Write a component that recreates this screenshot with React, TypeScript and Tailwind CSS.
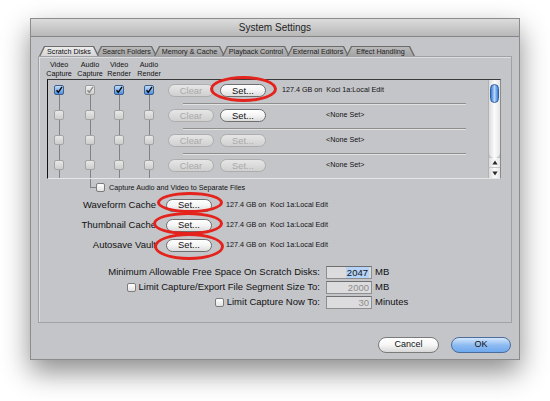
import React from "react";

const tabs = [
  { label: "Scratch Disks", w: "w-[60px]", active: true },
  { label: "Search Folders", w: "w-[61px]" },
  { label: "Memory & Cache", w: "w-[71px]" },
  { label: "Playback Control", w: "w-[68px]" },
  { label: "External Editors", w: "w-[62px]" },
  { label: "Effect Handling", w: "w-[69px]" },
];

const headers = [
  { top: "Video", bottom: "Capture", ml: "ml-[6px]" },
  { top: "Audio", bottom: "Capture", ml: "ml-[21px]" },
  { top: "Video", bottom: "Render", ml: "ml-[19px]" },
  { top: "Audio", bottom: "Render", ml: "ml-[20px]" },
];

type Box = "blue" | "gray" | "off";

const rows: { checks: Box[]; setOn: boolean; info: string; none?: boolean }[] = [
  { checks: ["blue", "gray", "blue", "blue"], setOn: true, info: "127.4 GB on\u00a0\u00a0Koci 1a:Local Edit" },
  { checks: ["off", "off", "off", "off"], setOn: true, info: "<None Set>", none: true },
  { checks: ["off", "off", "off", "off"], setOn: false, info: "<None Set>", none: true },
  { checks: ["off", "off", "off", "off"], setOn: false, info: "<None Set>", none: true },
];

const caches = ["Waveform Cache", "Thumbnail Cache", "Autosave Vault"];

const Tick = ({ color }: { color: string }) => (
  <svg width="8" height="8" viewBox="0 0 8 8" className="block">
    <path d="M1.5 4.2 L3.3 6.3 L7 0.8" fill="none" stroke={color} strokeWidth="1.4" />
  </svg>
);

const ListBox = ({ kind }: { kind: Box }) => {
  if (kind === "blue")
    return (
      <div className="w-[10px] h-[10px] rounded-[2px] border border-[#3c5f90] bg-gradient-to-b from-[#c4ddf8] to-[#4a8ddf] flex items-center justify-center">
        <Tick color="#0a0a0a" />
      </div>
    );
  if (kind === "gray")
    return (
      <div className="w-[10px] h-[10px] rounded-[2px] border border-[#9c9c9c] bg-gradient-to-b from-[#f2f2f2] to-[#cfcfcf] flex items-center justify-center">
        <Tick color="#8a8a8a" />
      </div>
    );
  return <div className="w-[10px] h-[10px] rounded-[2px] border border-[#a4a4a4] bg-gradient-to-b from-[#e8e8e8] to-[#cdcdcd]" />;
};

const PlainBox = () => (
  <div className="w-[9px] h-[9px] rounded-[2px] border border-[#7c7c7c] bg-gradient-to-b from-white to-[#e2e2e2] shrink-0" />
);

const Pill = ({ label, on, w }: { label: string; on: boolean; w: string }) => (
  <div
    className={
      on
        ? `${w} h-[13px] rounded-full border border-[#6e6e6e] bg-gradient-to-b from-white via-[#f4f4f4] to-[#dcdcdc] flex items-center justify-center text-[9.4px] text-[#111] leading-none shrink-0`
        : `${w} h-[13px] rounded-full border border-[#adadad] bg-gradient-to-b from-[#e6e6e6] to-[#d0d0d0] flex items-center justify-center text-[9.4px] text-[#a9a9a9] leading-none shrink-0`
    }
  >
    {label}
  </div>
);

const Field = ({ value, active }: { value: string; active?: boolean }) => (
  <div className="w-[46px] h-[13px] border border-[#8e8e8e] border-t-[#6f6f6f] bg-[#dcdcde] flex items-center justify-end pr-[2px] ml-[6px] shrink-0">
    {active ? (
      <span className="bg-[#b4d3f7] text-[#111] text-[9.5px] leading-[11px] px-[1px]">{value}</span>
    ) : (
      <span className="text-[#8c8c8c] text-[9.5px] leading-[11px]">{value}</span>
    )}
  </div>
);

export default function App() {
  return (
    <div className="w-[550px] h-[401px] bg-white overflow-hidden pt-[18px] pl-[30px] font-['Liberation_Sans',Arial,sans-serif] text-[#111]">
      <div className="relative w-[490px] h-[342px] bg-[#c4c5c9] border border-[#8c8c8c] shadow-[0_12px_26px_rgba(0,0,0,0.45)] flex flex-col">
        {/* title bar */}
        <div className="h-[18px] shrink-0 bg-gradient-to-b from-[#dcdcdc] to-[#b8b8b8] border-b border-[#858585] flex items-center justify-center text-[10px] text-[#1e1e1e]">
          System Settings
        </div>

        <div className="flex flex-col pl-[7px] pr-[7px] pt-[9px]">
          {/* tabs */}
          <div className="flex h-[10px] pl-[1px]">
            {tabs.map((t, i) => (
              <div
                key={t.label}
                className={`${t.w} h-[10px] ${i > 0 ? "-ml-[3px]" : ""} ${t.active ? "z-10" : ""} bg-[#6c6c6c] [clip-path:polygon(5px_0,calc(100%-5px)_0,100%_100%,0_100%)]`}
              >
                <div
                  className={`h-[10px] mt-[1px] mx-[1px] flex items-center justify-center text-[7.2px] leading-none [clip-path:polygon(5px_0,calc(100%-5px)_0,100%_100%,0_100%)] ${
                    t.active ? "bg-gradient-to-b from-[#ececec] to-[#d2d2d4] text-[#111]" : "bg-gradient-to-b from-[#b9b9b9] to-[#a2a2a4] text-[#222]"
                  }`}
                >
                  <span className="-mt-[1px]">{t.label}</span>
                </div>
              </div>
            ))}
          </div>

          {/* panel */}
          <div className="h-[267px] border border-[#a0a1a5] shadow-[inset_1px_1px_0_#dedede] flex flex-col">
            {/* column headers */}
            <div className="flex ml-[9px] mt-[3px] h-[19px]">
              {headers.map((h, i) => (
                <div key={i} className={`${h.ml} w-[10px] flex justify-center`}>
                  <div className="text-[7.2px] leading-[9px] text-center whitespace-nowrap text-[#111]">
                    {h.top}
                    <br />
                    {h.bottom}
                  </div>
                </div>
              ))}
            </div>

            {/* list */}
            <div className="ml-[8px] w-[454px] h-[100px] border border-l-[#111] border-t-[#3a3a3a] border-r-[#8a8a8a] border-b-[#e6e6e6] flex overflow-hidden">
              <div className="flex-1 flex flex-col overflow-hidden">
                {rows.map((r, ri) => (
                  <div key={ri} className="h-[25px] shrink-0 flex">
                    {r.checks.map((c, ci) => (
                      <div key={ci} className={`${headers[ci].ml} w-[10px] flex flex-col items-center`}>
                        <div className={`w-px h-[5px] ${ri === 0 ? "" : "bg-[#828282]"}`} />
                        <ListBox kind={c} />
                        <div className="w-px flex-1 bg-[#828282]" />
                      </div>
                    ))}
                    <div className="ml-[14px] flex flex-col">
                      <div className="h-[21px] flex items-center">
                        <Pill label="Clear" on={false} w="w-[46px]" />
                        <div className="ml-[6px]">
                          <Pill label="Set..." on={r.setOn} w="w-[46px]" />
                        </div>
                        <span className={`${r.none ? "ml-[60px]" : "ml-[16px]"} text-[7.2px] whitespace-nowrap text-[#111]`}>
                          {r.info}
                        </span>
                      </div>
                      <div className="h-[2px]" />
                      <div className="ml-[15px] w-[283px] h-[2px] border-t border-[#8e8e8e] border-b border-b-[#e2e2e2]" />
                    </div>
                  </div>
                ))}
              </div>
              {/* scrollbar */}
              <div className="w-[12px] shrink-0 flex flex-col border-l border-[#b2b2b2]">
                <div className="h-[78px] bg-gradient-to-r from-[#dcdcdc] via-[#fbfbfb] to-[#e6e6e6] rounded-b-[6px] flex flex-col items-center">
                  <div className="mt-[4px] w-[9px] h-[19px] rounded-full border border-[#2f5f9e] bg-gradient-to-r from-[#3a7ad4] via-[#b7d8fa] to-[#3c7cd6]" />
                </div>
                <div className="h-[10px] flex items-center justify-center bg-gradient-to-r from-[#dcdcdc] via-[#fbfbfb] to-[#e6e6e6] border-b border-[#c8c8c8]">
                  <svg width="6" height="5" viewBox="0 0 6 5">
                    <path d="M3 0.5 L5.6 4.5 L0.4 4.5 Z" fill="#2a2a2a" />
                  </svg>
                </div>
                <div className="h-[10px] flex items-center justify-center bg-gradient-to-r from-[#dcdcdc] via-[#fbfbfb] to-[#e6e6e6]">
                  <svg width="6" height="5" viewBox="0 0 6 5">
                    <path d="M3 4.5 L5.6 0.5 L0.4 0.5 Z" fill="#2a2a2a" />
                  </svg>
                </div>
              </div>
            </div>

            {/* capture separate files */}
            <div className="flex items-start ml-[51px] h-[14px]">
              <div className="w-[6px] h-[9px] border-l border-b border-[#828282]" />
              <div className="mt-[4px] flex items-center">
                <PlainBox />
                <span className="ml-[4px] text-[7.2px] leading-none whitespace-nowrap">Capture Audio and Video to Separate Files</span>
              </div>
            </div>

            {/* caches */}
            <div className="mt-[2px] flex flex-col">
              {caches.map((c) => (
                <div key={c} className="h-[20px] flex items-center">
                  <div className="w-[117px] text-right text-[9.5px] whitespace-nowrap">{c}</div>
                  <div className="ml-[10px]">
                    <Pill label="Set..." on={true} w="w-[46px]" />
                  </div>
                  <span className="ml-[14px] text-[7.2px] whitespace-nowrap">127.4 GB on&nbsp;&nbsp;Koci 1a:Local Edit</span>
                </div>
              ))}
            </div>

            {/* limits */}
            <div className="mt-[10px] flex flex-col gap-[1px]">
              <div className="h-[14px] flex items-center">
                <div className="w-[281px] flex justify-end text-[9.5px] whitespace-nowrap">
                  Minimum Allowable Free Space On Scratch Disks:
                </div>
                <Field value="2047" active />
                <span className="ml-[3px] text-[9.5px]">MB</span>
              </div>
              <div className="h-[14px] flex items-center">
                <div className="w-[281px] flex justify-end items-center gap-[3px] text-[9.5px] whitespace-nowrap">
                  <PlainBox />
                  Limit Capture/Export File Segment Size To:
                </div>
                <Field value="2000" />
                <span className="ml-[3px] text-[9.5px]">MB</span>
              </div>
              <div className="h-[14px] flex items-center">
                <div className="w-[281px] flex justify-end items-center gap-[3px] text-[9.5px] whitespace-nowrap">
                  <PlainBox />
                  Limit Capture Now To:
                </div>
                <Field value="30" />
                <span className="ml-[3px] text-[9.5px]">Minutes</span>
              </div>
            </div>
          </div>

          {/* buttons */}
          <div className="mt-[14px] flex justify-end gap-[12px] pr-[1px]">
            <div className="w-[61px] h-[16px] rounded-full border border-[#7a7a7a] bg-gradient-to-b from-white via-[#f6f6f6] to-[#d8d8d8] flex items-center justify-center text-[9px]">
              Cancel
            </div>
            <div className="w-[60px] h-[16px] rounded-full border border-[#4c6d9c] bg-gradient-to-b from-[#d4e7fc] via-[#8fbcf1] to-[#6da8ee] flex items-center justify-center text-[9px]">
              OK
            </div>
          </div>
        </div>

        {/* red annotation rings */}
        <div className="absolute left-[179px] top-[57px] w-[67px] h-[26px] rounded-[50%] border-[3px] border-[#e3231c]" />
        <div className="absolute left-[126px] top-[173px] w-[66px] h-[21px] rounded-[50%] border-[3px] border-[#e3231c]" />
        <div className="absolute left-[122px] top-[193px] w-[70px] h-[23px] rounded-[50%] border-[3px] border-[#e3231c]" />
        <div className="absolute left-[123px] top-[214px] w-[70px] h-[27px] rounded-[50%] border-[3px] border-[#e3231c]" />
      </div>
    </div>
  );
}
